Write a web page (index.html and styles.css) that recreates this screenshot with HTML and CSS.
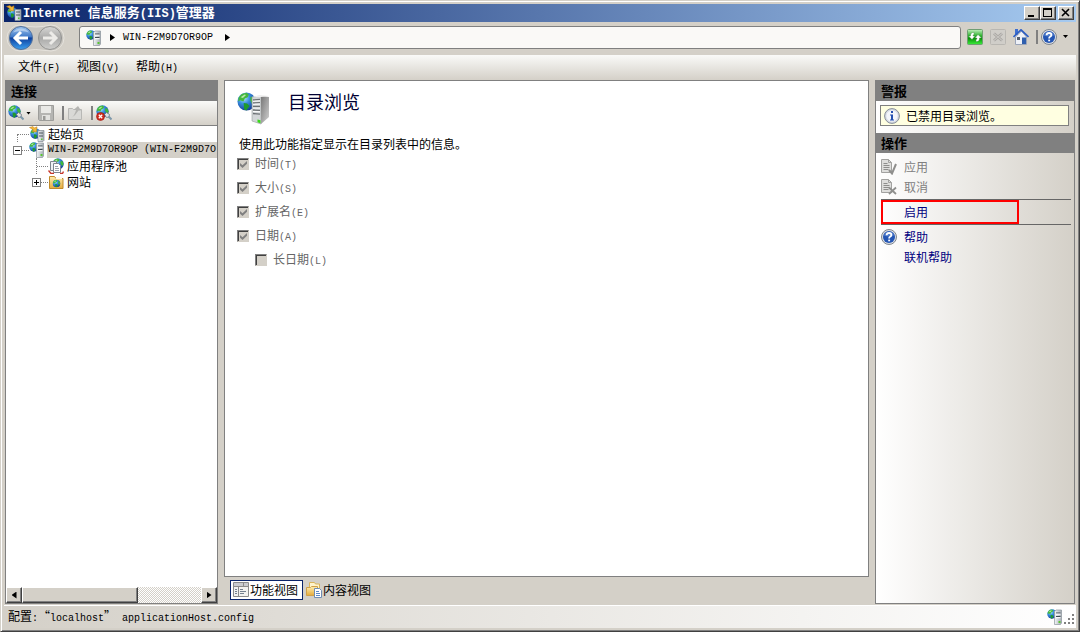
FILE: index.html
```html
<!DOCTYPE html>
<html lang="zh-CN">
<head>
  <meta charset="UTF-8" />
  <title>Internet 信息服务(IIS)管理器</title>
  <meta name="viewport" content="width=device-width, initial-scale=1.0"/>
  <link rel="stylesheet" href="styles.css">
</head>
<body>

<!-- shared icons -->
<svg class="defs" width="0" height="0" aria-hidden="true">
  <defs>
    <radialGradient id="gGlobe" cx="0.35" cy="0.3" r="0.8">
      <stop offset="0" stop-color="#b8ecff"/>
      <stop offset="0.4" stop-color="#3a8fe0"/>
      <stop offset="1" stop-color="#0a2f8c"/>
    </radialGradient>
    <linearGradient id="gTower" x1="0" x2="1" y1="0" y2="0">
      <stop offset="0" stop-color="#f4f6f8"/>
      <stop offset="1" stop-color="#a3abb2"/>
    </linearGradient>
    <linearGradient id="gSide" x1="0" x2="1" y1="0" y2="1">
      <stop offset="0" stop-color="#777"/>
      <stop offset="1" stop-color="#d2d2d2"/>
    </linearGradient>
    <linearGradient id="gBack" x1="0" x2="0" y1="0" y2="1">
      <stop offset="0" stop-color="#9cc4ee"/>
      <stop offset="0.45" stop-color="#3f78c8"/>
      <stop offset="0.5" stop-color="#0d3f9e"/>
      <stop offset="1" stop-color="#3aa0f0"/>
    </linearGradient>
    <linearGradient id="gFwd" x1="0" x2="0" y1="0" y2="1">
      <stop offset="0" stop-color="#d8d8d6"/>
      <stop offset="0.5" stop-color="#a9a9a8"/>
      <stop offset="1" stop-color="#cfcfcd"/>
    </linearGradient>
    <linearGradient id="gGreen" x1="0" x2="0" y1="0" y2="1">
      <stop offset="0" stop-color="#c4f0c0"/>
      <stop offset="0.4" stop-color="#35b535"/>
      <stop offset="0.6" stop-color="#0a930a"/>
      <stop offset="1" stop-color="#3df03d"/>
    </linearGradient>
    <linearGradient id="gFolder" x1="0" x2="0" y1="0" y2="1">
      <stop offset="0" stop-color="#ffeeb0"/>
      <stop offset="1" stop-color="#e5ab3c"/>
    </linearGradient>
    <symbol id="globe" viewBox="0 0 16 16">
      <circle cx="8" cy="8" r="7.6" fill="url(#gGlobe)"/>
      <path d="M4 1.6 8 .6l2 1.6-1 2.2-2.4 1L5.4 8 2.6 7 1 8 1.4 4.6z" fill="#45b83c"/>
      <path d="m5.6 9.2 3 .4 2 2.2-1.8 2.2-.8 1.6-2-.8-.2-2.8z" fill="#1f9a2e"/>
      <path d="m11.4 4 2.6.2 1.4 3.4-1 2.8-1.8-.6-1.4-2.6z" fill="#3fb83b"/>
      <path d="M3 4.4 6.4 2l1.2.6L5 5z" fill="#d5f5c8" opacity=".8"/>
    </symbol>
    <symbol id="server" viewBox="0 0 16 16">
      <use href="#globe" x="0" y="0" width="10" height="10"/>
      <path d="M7.5 2.5 9 1h5.500v13l-1 1.500h-6z" fill="url(#gTower)" stroke="#8d959c" stroke-width=".7"/>
      <path d="M9 4h4.500M9 7.500h4.500" stroke="#3f4a52"/>
      <path d="M9 5.200h4.500M9 8.700h4.500" stroke="#fff"/>
      <path d="M11.5 12h2v2h-2z" fill="#58c630"/>
    </symbol>
    <symbol id="start" viewBox="0 0 16 16">
      <use href="#globe" x="1" y="2" width="11" height="11"/>
      <path d="M.5 1.500 4 .5l1.500 1.500L8 .8 7.500 6 3 5.500l1.500-1.500L3 3z" fill="#f5b73a" stroke="#b87a14" stroke-width=".5"/>
      <path d="M9 4.500h6v10l-1 1H9z" fill="url(#gTower)" stroke="#838b92" stroke-width=".7"/>
      <path d="M10 7h4M10 10h4" stroke="#4c565e"/>
      <path d="M12 12.500h1.500V14H12z" fill="#58c630"/>
    </symbol>
    <symbol id="connect" viewBox="0 0 16 16">
      <use href="#globe" x="0" y="0" width="13" height="13"/>
      <path d="m8.500 9.500 2-2 3 2-.5 2.500-2.500.5z" fill="#dfe3e6" stroke="#70777c" stroke-width=".8"/>
      <path d="m12.500 11.500 3 3" stroke="#7d98ab" stroke-width="2"/>
    </symbol>
    <symbol id="help" viewBox="0 0 16 16">
      <circle cx="8" cy="8" r="7.500" fill="#dcdfe4" stroke="#7f868e"/>
      <circle cx="8" cy="8" r="6" fill="#2456b4"/>
      <path d="M3 6.500a5.200 5.200 0 0 1 10 0q-5 2-10 0z" fill="#6b94d8" opacity=".6"/>
      <path d="M5.600 6.200Q5.700 4 8.100 4q2.300 0 2.300 1.900 0 1.200-1.300 1.800-1 .5-1 1.700" fill="none" stroke="#fff" stroke-width="1.800"/>
      <path d="M7.200 10.600h1.900v1.700H7.200z" fill="#fff"/>
    </symbol>
    <symbol id="doc" viewBox="0 0 16 16">
      <path d="M.5.5h7l3 3v10H.5z" fill="#dededc" stroke="#a2a2a0"/>
      <path d="M7.500.5v3h3" fill="none" stroke="#a2a2a0"/>
      <path d="M2.500 4.500h4M2.500 6.500h6M2.500 8.500h6M2.500 10.500h5" stroke="#8d8d8b"/>
    </symbol>
  </defs>
</svg>

<div class="window">

  <header class="titlebar">
    <svg class="icon" viewBox="0 0 16 16"><use href="#start"/></svg>
    <h1><span class="en">Internet </span>信息服务<span class="en">(IIS)</span>管理器</h1>
    <div class="caption-buttons">
      <button type="button" class="cap" aria-label="最小化"><svg width="12" height="10"><path d="M2 7h6v2H2z"/></svg></button>
      <button type="button" class="cap" aria-label="最大化"><svg width="12" height="10"><path d="M1 0h9v9H1zM2 2v6h7V2z" fill-rule="evenodd"/></svg></button>
      <button type="button" class="cap close" aria-label="关闭"><svg width="12" height="10"><path d="m2 1 7 7M9 1 2 8" stroke="#000" stroke-width="1.600"/></svg></button>
    </div>
  </header>

  <nav class="navbar">
    <svg class="travel" viewBox="0 0 62 30" role="img" aria-label="后退 前进">
      <path d="M15 2Q31 6 46 2a13 13 0 0 1 0 26Q31 25 15 28a13 13 0 0 1 0-26z" fill="#c9c6c0" stroke="#e6e3dd"/>
      <circle cx="16" cy="15" r="11.500" fill="url(#gBack)" stroke="#4f6f9c"/>
      <path d="M8 9.500a10 10 0 0 1 16 0q-8-3-16 0z" fill="#fff" opacity=".4"/>
      <path d="m16 9-6 6 6 6M10.500 15H23" fill="none" stroke="#fff" stroke-width="3"/>
      <circle cx="45" cy="15" r="11.500" fill="url(#gFwd)" stroke="#939391"/>
      <path d="m45 9 6 6-6 6M50.500 15H38" fill="none" stroke="#ecebe8" stroke-width="3"/>
    </svg>
    <div class="address">
      <svg class="icon" viewBox="0 0 16 16"><use href="#server"/></svg>
      <span class="arrow-right"></span>
      <span class="en">WIN-F2M9D7OR9OP</span>
      <span class="arrow-right"></span>
    </div>
    <div class="nav-tools">
      <button type="button" class="tool" aria-label="刷新">
        <svg class="icon" viewBox="0 0 16 16">
          <rect x=".5" y=".5" width="15" height="15" rx="1" fill="url(#gGreen)" stroke="#6f9e72"/>
          <path d="M7 3.500Q3.500 3 3.500 7H1.500L5 10.500 8 7H6Q6 5.500 7 5.500zM9 12.500q3.500.5 3.500-3.500h2L11 5.500 8 9h2q0 1.500-1 1.500z" fill="#fff" stroke="#4c8a4c" stroke-width=".4"/>
        </svg>
      </button>
      <button type="button" class="tool" aria-label="停止" disabled>
        <svg class="icon" viewBox="0 0 16 16">
          <rect x=".5" y=".5" width="15" height="15" rx="1" fill="#d0cec9" stroke="#b9b7b2"/>
          <path d="m4 4.500 8 7m0-7-8 7" stroke="#a3a19d" stroke-width="2.600"/>
          <path d="m4 4.500 8 7m0-7-8 7" stroke="#c6c4c0" stroke-width="1.200"/>
        </svg>
      </button>
      <button type="button" class="tool" aria-label="主页">
        <svg class="icon" viewBox="0 0 16 16">
          <path d="M2 0h3v6H2z" fill="#3d6ed0"/>
          <path d="M2.500 8 8.500 2l5 6v7.500h-11z" fill="#eef1f7" stroke="#9aa4b8"/>
          <path d="M.5 8 8 .8 15.500 8" fill="none" stroke="#2e5fc4" stroke-width="1.700"/>
          <path d="M4 8h3v3H4z" fill="#555f70"/>
          <path d="M9 8.500h4V15H9z" fill="#2f5fae"/>
        </svg>
      </button>
      <span class="sep"></span>
      <button type="button" class="tool help-tool" aria-label="帮助">
        <svg class="icon" viewBox="0 0 16 16"><use href="#help"/></svg>
        <span class="arrow-down"></span>
      </button>
    </div>
  </nav>

  <div class="menubar">
    <button type="button">文件<span class="en">(F)</span></button>
    <button type="button">视图<span class="en">(V)</span></button>
    <button type="button">帮助<span class="en">(H)</span></button>
  </div>

  <div class="main">

    <aside class="connections">
      <h2>连接</h2>
      <div class="toolbar">
        <button type="button" class="tool connect-tool" aria-label="连接">
          <svg class="icon" viewBox="0 0 16 16"><use href="#connect"/></svg>
          <span class="arrow-down"></span>
        </button>
        <button type="button" class="tool" aria-label="保存" disabled>
          <svg class="icon" viewBox="0 0 16 16">
            <path d="M.5.5h15v15h-14l-1-1z" fill="#b5b5b2" stroke="#9d9d9a"/>
            <path d="M3 1h10v7H3z" fill="#e9e9e6"/>
            <path d="M4 10h8v5H4z" fill="#e2e2df"/>
            <path d="M5 11h2.500v4H5z" fill="#9a9a97"/>
          </svg>
        </button>
        <span class="sep"></span>
        <button type="button" class="tool" aria-label="上移" disabled>
          <svg class="icon" viewBox="0 0 16 16">
            <path d="M1.500 3.500h4l1 1h8v10h-13z" fill="#d9d9d6" stroke="#b8b8b5"/>
            <path d="M4 13q4-3 5-8H6.500L11 1l3 4.500h-2.500Q9 10 4 13z" fill="#b4b4b1"/>
          </svg>
        </button>
        <span class="sep"></span>
        <button type="button" class="tool" aria-label="断开连接">
          <svg class="icon" viewBox="0 0 16 16">
            <use href="#connect"/>
            <circle cx="4.500" cy="11.500" r="4" fill="#d02a1e" stroke="#9d1a12" stroke-width=".6"/>
            <path d="m2.800 9.800 3.400 3.400m0-3.400-3.400 3.400" stroke="#fff" stroke-width="1.300"/>
          </svg>
        </button>
      </div>
      <ul class="tree">
        <li class="row"><span class="branch first"></span><svg class="icon" viewBox="0 0 16 16"><use href="#start"/></svg><span class="name">起始页</span></li>
        <li>
          <div class="row"><button type="button" class="expander" aria-label="折叠"></button><span class="dots"></span><svg class="icon" viewBox="0 0 16 16"><use href="#server"/></svg><span class="name selected en">WIN-F2M9D7OR9OP (WIN-F2M9D7O</span></div>
          <ul>
            <li class="row"><span class="branch"></span>
              <svg class="icon" viewBox="0 0 16 16">
                <use href="#globe" x="4" y="0" width="12" height="12"/>
                <path d="M2.500 3.500h6v9h-6z" fill="#eef1f4" stroke="#7d868f"/>
                <path d="M5.500 5.500h5l2 2v7h-7z" fill="#fff" stroke="#7d868f"/>
                <path d="M7 8.500h3M7 10.500h4M7 12.500h4" stroke="#9aa3ad"/>
                <path d="M.5 12.500 3 15.500h3M12 15.500h2.500l1-2" fill="none" stroke="#c8382c" stroke-width="1.400"/>
              </svg>
              <span class="name">应用程序池</span></li>
            <li class="row"><button type="button" class="expander plus" aria-label="展开"></button><span class="dots"></span>
              <svg class="icon" viewBox="0 0 16 16">
                <path d="M1.500 2.500h5l1.500 2h7v10H1.500z" fill="url(#gFolder)" stroke="#c08a2a"/>
                <path d="M8 3h6v2H8z" fill="#fffbe8"/>
                <use href="#globe" x="4.500" y="5.500" width="8" height="8"/>
              </svg>
              <span class="name">网站</span></li>
          </ul>
        </li>
      </ul>
      <div class="hscroll">
        <button type="button" aria-label="向左滚动"><span class="arrow-left"></span></button>
        <div class="thumb"></div>
        <div class="track"></div>
        <button type="button" aria-label="向右滚动"><span class="arrow-right"></span></button>
      </div>
    </aside>

    <main class="center">
      <section class="page">
        <div class="page-head">
          <svg width="34" height="34" viewBox="0 0 34 34">
            <use href="#globe" x="0" y="1" width="19" height="19"/>
            <path d="m15 6 9-1v28l-9-3z" fill="#d3d6d8" stroke="#999da0" stroke-width=".6"/>
            <path d="m24 5 8 1v20l-8 7z" fill="url(#gSide)"/>
            <path d="m15 6 9-2 8 1-8 1z" fill="#efefef"/>
            <path d="m16 9 7-.5M16 12l7-.3M16 15.500h7M16 19l7 .3M16 22.500l7 .7" stroke="#6c7174" stroke-width="1.300"/>
            <path d="m16 10.300 7-.5M16 13.300l7-.3M16 17h7M16 20.500l7 .3" stroke="#fff"/>
            <path d="M20.500 28.500l3 .7v3l-3-1z" fill="#38d818"/>
          </svg>
          <h3>目录浏览</h3>
        </div>
        <p>使用此功能指定显示在目录列表中的信息。</p>
        <label class="check"><input type="checkbox" checked disabled><span>时间<span class="en">(T)</span></span></label>
        <label class="check"><input type="checkbox" checked disabled><span>大小<span class="en">(S)</span></span></label>
        <label class="check"><input type="checkbox" checked disabled><span>扩展名<span class="en">(E)</span></span></label>
        <label class="check"><input type="checkbox" checked disabled><span>日期<span class="en">(A)</span></span></label>
        <label class="check sub"><input type="checkbox" disabled><span>长日期<span class="en">(L)</span></span></label>
      </section>
      <div class="view-tabs">
        <button type="button" class="active">
          <svg class="icon" viewBox="0 0 16 16">
            <path d="M.5.5h15v14H.5z" fill="#f2f2f0" stroke="#8b8b8b"/>
            <path d="M1 1h14v3H1z" fill="#c9cbd0"/>
            <path d="M1 4.500h14M5.500 4v10M10.500 1v3" stroke="#8b8b8b"/>
            <path d="M2 7.500h2M2 9.500h2M2 11.500h2M7 7.500h3M7 9.500h6M7 11.500h4" stroke="#74808f"/>
          </svg>
          功能视图
        </button>
        <button type="button">
          <svg class="icon" viewBox="0 0 16 16">
            <path d="M3.500.5h5l1 1.500h4v9h-10z" fill="#fff4cc" stroke="#d9b45c"/>
            <path d="M.5 5.500h4l1-1h6v9H.5z" fill="url(#gFolder)" stroke="#d0a048"/>
            <path d="M8.500 6.500h5l2 2v7h-7z" fill="#fff" stroke="#6f8db4"/>
            <path d="M10 9.500h3M10 11.500h4M10 13.500h4" stroke="#5b87c5"/>
          </svg>
          内容视图
        </button>
      </div>
    </main>

    <aside class="actions">
      <h2>警报</h2>
      <div class="alert">
        <svg class="icon" viewBox="0 0 16 16">
          <circle cx="8" cy="8" r="7.400" fill="#d9dde6" stroke="#868d97"/>
          <circle cx="8" cy="8" r="5.600" fill="#f4f6fb"/>
          <path d="M7 3h2v2H7zM6 6.500h3v5h1v1H6v-1h1v-4H6z" fill="#2450b0"/>
        </svg>
        已禁用目录浏览。
      </div>
      <h2>操作</h2>
      <ul class="action-list">
        <li>
          <button type="button" disabled>
            <svg class="icon" viewBox="0 0 16 16"><use href="#doc"/><path d="m8 11 3 3.500L15 5" fill="none" stroke="#8f8f8d" stroke-width="2"/></svg>
            应用
          </button>
        </li>
        <li>
          <button type="button" disabled>
            <svg class="icon" viewBox="0 0 16 16"><use href="#doc"/><path d="m8 8.500 7 6.500m0-6.500L8 15" fill="none" stroke="#8f8f8d" stroke-width="1.800"/></svg>
            取消
          </button>
        </li>
        <li class="boxed"><a href="#">启用</a></li>
        <li>
          <a href="#"><svg class="icon" viewBox="0 0 16 16"><use href="#help"/></svg>帮助</a>
        </li>
        <li><a href="#" class="no-icon">联机帮助</a></li>
      </ul>
    </aside>

  </div>

  <footer class="statusbar">
    <span>配置<span class="en">:</span>“<span class="en">localhost</span>”<span class="en"> applicationHost.config</span></span>
    <div class="status-right">
      <svg class="icon" viewBox="0 0 16 16"><use href="#server"/></svg>
      <svg width="11" height="11" viewBox="0 0 11 11"><path d="M8 0h2v2H8zM4 4h2v2H4zM8 4h2v2H8zM0 8h2v2H0zM4 8h2v2H4zM8 8h2v2H8z" fill="#808080"/></svg>
    </div>
  </footer>

</div>

</body>
</html>
```
FILE: styles.css
```css
* {
  box-sizing: border-box;
}
body {
  margin: 0;
  font-family: "Noto Sans CJK SC", sans-serif;
  font-size: 12px;
  line-height: 16px;
  color: #000;
  background: #d4d0c8;
}
h1, h2, h3, p, ul {
  margin: 0;
  padding: 0;
}
ul {
  list-style: none;
}
button {
  font: inherit;
  color: inherit;
  background: none;
  border: none;
  padding: 0;
}
svg {
  display: block;
  flex: none;
}
.defs {
  position: absolute;
}
.icon {
  width: 16px;
  height: 16px;
}
.en {
  font-family: "Liberation Mono", monospace;
  font-size: 10px;
  white-space: pre;
}

/* little triangles */
.arrow-right, .arrow-left, .arrow-down {
  flex: none;
  width: 5px;
  height: 7px;
  background: #000;
  clip-path: polygon(0 0, 100% 50%, 0 100%);
}
.arrow-left {
  clip-path: polygon(100% 0, 0 50%, 100% 100%);
}
.arrow-down {
  width: 5px;
  height: 3px;
  clip-path: polygon(0 0, 100% 0, 50% 100%);
}

/* window frame */
.window {
  display: flex;
  flex-direction: column;
  min-height: 100vh;
  padding: 3px;
  background: #d4d0c8;
  border: 1px solid;
  border-color: #d4d0c8 #404040 #404040 #d4d0c8;
  box-shadow: inset 1px 1px #fff, inset -1px -1px #808080;
}
.titlebar {
  display: flex;
  align-items: center;
  height: 18px;
  padding: 0 2px;
  color: #fff;
  background: linear-gradient(to right, #0a246a, #a6caf0);
}
.titlebar h1 {
  flex: 1;
  margin-left: 1px;
  font-size: 13px;
  line-height: 18px;
  font-weight: bold;
}
.titlebar .en {
  font-size: 12px;
}
.caption-buttons {
  display: flex;
}
.cap, .hscroll button, .thumb {
  background: #d4d0c8;
  border: 1px solid;
  border-color: #fff #404040 #404040 #fff;
  box-shadow: inset -1px -1px #808080;
}
.cap {
  display: flex;
  align-items: center;
  justify-content: center;
  width: 16px;
  height: 14px;
}
.cap.close {
  margin-left: 2px;
}

/* back / forward and address */
.navbar {
  display: flex;
  align-items: center;
  height: 33px;
  padding: 0 8px 2px 1px;
}
.travel {
  width: 62px;
  height: 30px;
}
.address {
  flex: 1;
  display: flex;
  align-items: center;
  height: 23px;
  margin: 0 6px 0 12px;
  padding-left: 6px;
  background: #faf9f7;
  border: 1px solid #808080;
  border-radius: 3px;
}
.address .arrow-right {
  margin: 0 8px;
}
.address .en + .arrow-right {
  margin-left: 12px;
}
.nav-tools, .toolbar {
  display: flex;
  align-items: center;
}
.nav-tools {
  gap: 7px;
  padding-bottom: 2px;
}
.tool {
  display: flex;
  align-items: center;
}
.sep {
  width: 2px;
  height: 14px;
  background: #808080;
}
.help-tool {
  gap: 6px;
  margin-left: -4px;
}

.menubar {
  display: flex;
  gap: 17px;
  height: 25px;
  padding-left: 14px;
  background: linear-gradient(#fafaf8, #d4d0c8);
}

/* three panes */
.main {
  flex: 1;
  display: flex;
  gap: 6px;
  padding: 0 1px 1px;
}
h2 {
  height: 20px;
  padding-left: 5px;
  font-size: 13px;
  line-height: 20px;
  font-weight: bold;
  background: #808080;
}
.connections {
  display: flex;
  flex-direction: column;
  width: 213px;
  background: #fff;
  border: 1px solid #808080;
}
.toolbar {
  gap: 7px;
  height: 25px;
  padding-left: 2px;
  background: linear-gradient(#fafaf8, #d4d0c8);
  border-bottom: 1px solid #808080;
}
.connect-tool {
  gap: 2px;
}
.toolbar .sep {
  margin: 0 -4px 0 1px;
}
.tree {
  flex: 1;
}
.row {
  display: flex;
  align-items: center;
  height: 16px;
}
.name {
  margin-left: 3px;
  white-space: nowrap;
}
.selected {
  flex: 1;
  margin-left: 2px;
  padding-left: 1px;
  background: #d4d0c8;
  white-space: pre;
}
.branch {
  width: 12px;
  height: 16px;
  margin-left: 30px;
  border-left: 1px dotted #808080;
}
.branch::after {
  content: "";
  display: block;
  margin-top: 8px;
  border-top: 1px dotted #808080;
}
.branch.first {
  height: 8px;
  margin-left: 11px;
  align-self: flex-end;
}
.branch.first::after {
  margin-top: 0;
}
.expander {
  flex: none;
  width: 9px;
  height: 9px;
  margin-left: 7px;
  border: 1px solid #808080;
  background: linear-gradient(#000, #000) center / 5px 1px no-repeat;
}
.plus {
  margin-left: 26px;
  background: linear-gradient(#000, #000) center / 5px 1px no-repeat,
    linear-gradient(#000, #000) center / 1px 5px no-repeat;
}
.dots {
  flex: none;
  width: 7px;
  border-top: 1px dotted #808080;
}
.hscroll {
  display: flex;
  height: 16px;
}
.hscroll button {
  display: flex;
  align-items: center;
  justify-content: center;
  width: 16px;
}
.thumb {
  width: 116px;
}
.track {
  flex: 1;
  background: repeating-conic-gradient(#fff 0 25%, #d4d0c8 0 50%) 0 0 / 2px 2px;
}

.center {
  flex: 1;
  display: flex;
  flex-direction: column;
}
.page {
  flex: 1;
  padding: 10px 12px;
  background: #fff;
  border: 1px solid #808080;
}
.page-head {
  display: flex;
  gap: 17px;
  height: 45px;
}
.page-head h3 {
  font-size: 18px;
  line-height: 20px;
  font-weight: normal;
  color: #000032;
}
.page p {
  padding-left: 2px;
}
.check {
  display: flex;
  align-items: center;
  gap: 6px;
  width: max-content;
  height: 24px;
  color: #666;
}
.check.sub {
  padding-left: 18px;
}
.check input {
  appearance: none;
  width: 12px;
  height: 12px;
  margin: 0;
  background: #d4d0c8;
  border: 1px solid;
  border-color: #808080 #d4d0c8 #d4d0c8 #808080;
  box-shadow: inset 1px 1px #404040;
}
.check input:checked::before {
  content: "";
  display: block;
  width: 7px;
  height: 7px;
  margin: 2px;
  background: #808080;
  clip-path: polygon(0 30%, 36% 62%, 100% 0, 100% 38%, 36% 100%, 0 68%);
}
.view-tabs {
  display: flex;
  height: 27px;
  padding: 3px 6px 4px;
}
.view-tabs button {
  display: flex;
  align-items: center;
  gap: 1px;
  padding: 0 2px;
  border: 1px solid transparent;
}
.view-tabs .active {
  padding: 0 4px 0 2px;
  background: #fff;
  border-color: #0a246a;
}

.actions {
  width: 200px;
  background: linear-gradient(to right, #fff, #d4d0c8);
  border: 1px solid #808080;
}
.alert {
  display: flex;
  align-items: center;
  gap: 6px;
  height: 21px;
  margin: 4px 5px 7px 4px;
  padding-left: 3px;
  background: #ffffe1;
  border: 1px solid #808080;
}
.action-list {
  padding: 4px 3px 0 5px;
}
.action-list button, .action-list a {
  display: flex;
  align-items: center;
  gap: 7px;
  height: 20px;
  color: #00007f;
  text-decoration: none;
}
.action-list button {
  color: #808080;
}
.action-list .no-icon {
  padding-left: 23px;
}
.boxed {
  margin: 2px 0;
  border: solid #666;
  border-width: 1px 0;
}
.action-list .boxed a {
  width: 138px;
  height: 24px;
  padding-left: 21px;
  border: 2px solid #f00;
}

.statusbar {
  display: flex;
  align-items: center;
  justify-content: space-between;
  height: 23px;
  padding: 0 1px 0 4px;
  background: linear-gradient(to right, #d4d0c8, #fff);
  border-top: 1px solid #fff;
}
.status-right {
  display: flex;
  align-items: flex-end;
  gap: 1px;
}
```
